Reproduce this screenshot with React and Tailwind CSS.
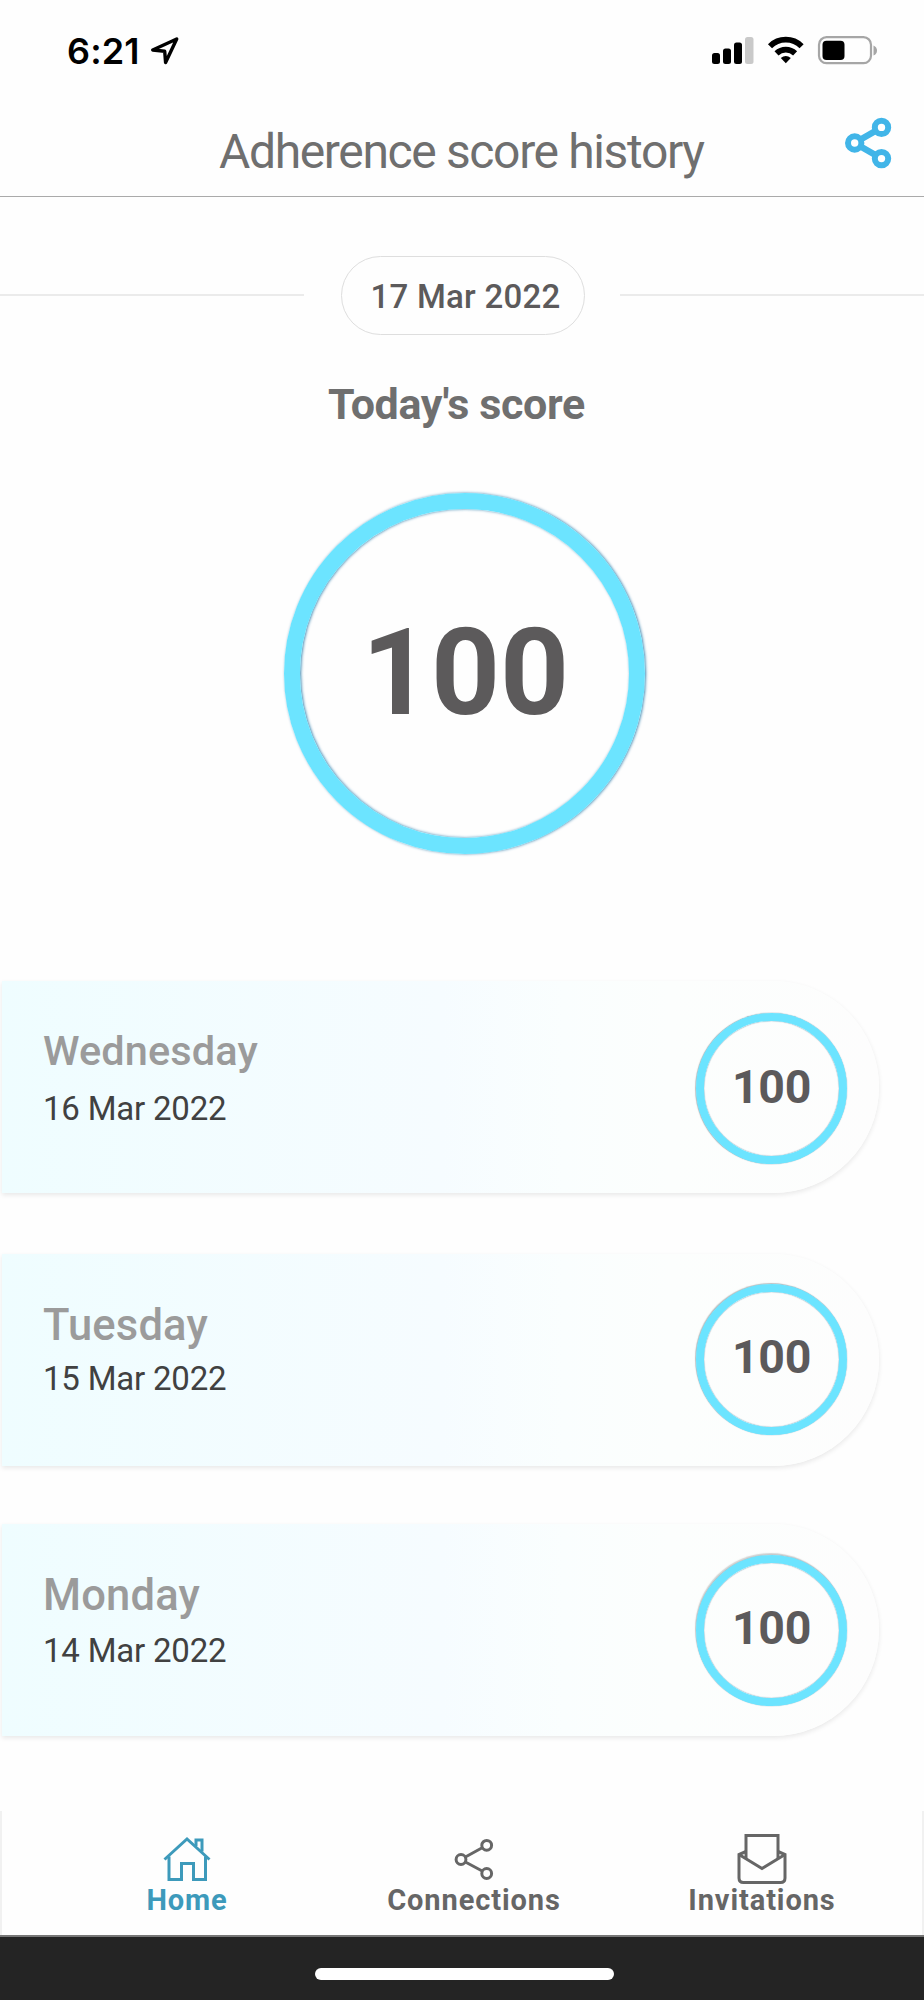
const days = [
  {
    day: "Wednesday",
    date: "16 Mar 2022",
    score: 100,
    rowClass: "mb-[61px]",
    dayClass: "mt-[46px] text-[41.5px] tracking-[0.1px]",
    dateClass: "mt-[14px]",
    ringClass: "mt-[32px] shadow-[-1px_0_1px_rgba(90,90,90,0.3),0_0_1px_rgba(20,80,120,0.8),inset_0_0_1px_rgba(20,80,120,0.8)]",
    scoreClass: "mt-[38px]",
  },
  {
    day: "Tuesday",
    date: "15 Mar 2022",
    score: 100,
    rowClass: "mb-[58px]",
    dayClass: "mt-[48px] text-[43.5px] tracking-[0.2px]",
    dateClass: "mt-[9px]",
    ringClass: "mt-[30px] shadow-[-1px_-1px_1px_rgba(90,90,90,0.3),0_0_1px_rgba(20,80,120,0.8),inset_0_0_1px_rgba(20,80,120,0.8)]",
    scoreClass: "mt-[37px]",
  },
  {
    day: "Monday",
    date: "14 Mar 2022",
    score: 100,
    rowClass: "mb-[75px]",
    dayClass: "mt-[48px] text-[43.5px] tracking-[0.2px]",
    dateClass: "mt-[11px]",
    ringClass: "mt-[31px] shadow-[-1px_-2px_1px_rgba(90,90,90,0.25),0_0_1px_rgba(20,80,120,0.8),inset_0_0_1px_rgba(20,80,120,0.8)]",
    scoreClass: "mt-[37px]",
  },
];

const StatusBar = () => (
  <div className="h-[100px] flex items-start justify-between pl-[67px] pr-[46px]">
    <div className="flex items-start pt-[29px]">
      <span className="w-[72px] whitespace-nowrap text-[36px] leading-[44px] tracking-[0.1px] font-semibold text-black font-['Inter',sans-serif]">
        6:21
      </span>
      <svg className="ml-[11px] mt-[7px]" width="30" height="30" viewBox="0 0 30 30" fill="none">
        <path d="M2.700 14 L26.700 3 L15.600 26.500 L14.700 15.300 Z" stroke="#000" strokeWidth="3.400" strokeLinejoin="round" />
      </svg>
    </div>
    <svg className="mt-[34px]" width="166" height="34" viewBox="0 0 166 34">
      <rect x="0" y="19" width="8" height="11" rx="2.500" />
      <rect x="11" y="14.500" width="8" height="15.500" rx="2.500" />
      <rect x="22" y="8.500" width="8" height="21.500" rx="2.500" />
      <rect x="33" y="3" width="8.500" height="27" rx="2.500" fill="#c9c9c9" />
      <g fill="none" stroke="#000" strokeWidth="5.800">
        <path d="M58 12.200 A22.500 22.500 0 0 1 89.600 12.200" />
        <path d="M64.500 19.300 A13.500 13.500 0 0 1 83.100 19.300" />
      </g>
      <path d="M68.800 24 Q73.800 19.800 78.800 24 L73.800 29.300 Z" />
      <rect x="107" y="3.200" width="52" height="26" rx="7.500" fill="none" stroke="#a6a6a6" strokeWidth="2.200" />
      <rect x="110.500" y="6.700" width="22" height="19.300" rx="4" />
      <path d="M161.500 11.500 Q165 13 165 16.500 Q165 20 161.500 21.500 Z" fill="#a6a6a6" />
    </svg>
  </div>
);

const Header = () => (
  <header className="h-[97px] flex items-start border-b border-[#aaaaaa]">
    <h1 className="ml-[219px] mt-[24px] w-[500px] whitespace-nowrap text-[48px] leading-[56px] tracking-[-1.36px] text-[#6f6f6f]">
      Adherence score history
    </h1>
    <svg className="ml-[126px] mt-[17px]" width="47" height="52" viewBox="0 0 47 52" fill="none" stroke="#41b5e8">
      <path d="M9.500 26 L36.500 10.500 M9.500 26 L36.500 41.500" strokeWidth="6.500" />
      <g fill="#fff" strokeWidth="6">
        <circle cx="9.700" cy="26" r="6.700" />
        <circle cx="36.500" cy="10.400" r="6.700" />
        <circle cx="36.500" cy="41.600" r="6.700" />
      </g>
    </svg>
  </header>
);

const ScoreRow = ({ item }) => (
  <div
    className={`ml-[2px] w-[877px] h-[212px] flex justify-between rounded-r-[106px] bg-[linear-gradient(90deg,#effdff,#f6fcff_50%,#fafefe_64%,#fcfefd_76%,#fdfdfd)] shadow-[0_2px_5px_rgba(0,0,0,0.09)] ${item.rowClass}`}
  >
    <div className="pl-[41px]">
      <h3 className={`leading-[48px] font-medium text-[#9b9b9b] ${item.dayClass}`}>{item.day}</h3>
      <p className={`text-[33px] leading-[40px] tracking-[-0.2px] text-[#414141] ${item.dateClass}`}>{item.date}</p>
    </div>
    <div className={`mr-[32px] size-[151px] flex justify-center rounded-full border-8 border-[#6ce4ff] ${item.ringClass}`}>
      <span className={`text-[46.5px] leading-[56px] tracking-[-0.3px] font-bold text-[#5c5a5b] ${item.scoreClass}`}>{item.score}</span>
    </div>
  </div>
);

const HomeIcon = () => (
  <svg width="48" height="46" viewBox="0 0 48 46" fill="none" stroke="#3d9abb" strokeWidth="3">
    <path d="M1.500 23.500 L24 3 L46.500 23.500" />
    <path d="M6 20.500 V43.500 H18.500 V27.500 H30.500 V43.500 H42.500 V20.500" />
    <path d="M33 10 V4 H39 V15.500" />
  </svg>
);

const ConnectionsIcon = () => (
  <svg width="40" height="46" viewBox="0 0 40 46" fill="none" stroke="#666" strokeWidth="3">
    <circle cx="7" cy="23.500" r="4.900" />
    <circle cx="32.700" cy="9.300" r="4.900" />
    <circle cx="32.700" cy="37.500" r="4.900" />
    <path d="M11.400 21 L28.200 11.800 M11.400 26 L28.200 35" />
  </svg>
);

const InvitationsIcon = () => (
  <svg width="50" height="52" viewBox="0 0 50 52" fill="none" stroke="#666" strokeWidth="3">
    <path d="M9 26 V2.500 H41 V26" />
    <path d="M9 18.500 L2 21.500 V45 Q2 49.500 6.500 49.500 H43.500 Q48 49.500 48 45 V21.500 L41 18.500" />
    <path d="M2 21.500 L25 35.500 L48 21.500" />
  </svg>
);

const BottomNav = () => (
  <nav className="h-[124px] flex items-start border-x-2 border-x-[#f1f1f1] text-[29px] leading-[34px] font-bold tracking-[0.9px]">
    <div className="ml-[125px] w-[120px] pt-[25px] flex flex-col items-center text-[#3d9abb]">
      <div className="h-[47px]"><HomeIcon /></div>
      <span>Home</span>
    </div>
    <div className="ml-[127px] w-[200px] pt-[25px] flex flex-col items-center text-[#666]">
      <div className="h-[47px]"><ConnectionsIcon /></div>
      <span>Connections</span>
    </div>
    <div className="ml-[88px] w-[200px] pt-[22px] flex flex-col items-center text-[#666]">
      <div className="h-[50px]"><InvitationsIcon /></div>
      <span>Invitations</span>
    </div>
  </nav>
);

const App = () => {
  return (
    <div className="w-[924px] h-[2000px] overflow-hidden bg-[#fefefe] font-['Roboto',sans-serif]">
      <StatusBar />
      <Header />

      <div className="mt-[58px] h-[80px] flex items-center">
        <div className="w-[304px] h-[2px] bg-[#ebebeb]"></div>
        <div className="ml-[37px] w-[244px] h-[79px] flex justify-center rounded-full border border-[#dedede]">
          <span className="mt-[20px] ml-[5px] text-[33px] leading-[40px] tracking-[0.25px] font-medium whitespace-nowrap text-[#5c5a5b]">
            17 Mar 2022
          </span>
        </div>
        <div className="ml-[35px] flex-1 h-[2px] bg-[#ebebeb]"></div>
      </div>

      <h2 className="mt-[43px] ml-[328px] h-[52px] text-[43px] leading-[52px] tracking-[-0.35px] font-bold whitespace-nowrap text-[#6f6f6f]">
        Today's score
      </h2>

      <div className="mt-[63px] ml-[284px] size-[361px] flex justify-center rounded-full border-[16px] border-[#6ce4ff] shadow-[1px_0_3px_rgba(20,110,160,0.8),inset_1px_0_3px_rgba(20,110,160,0.8)]">
        <span className="mt-[93px] ml-[2px] text-[120.5px] leading-[142px] font-bold text-[#5c5a5b]">100</span>
      </div>

      <div className="mt-[127px]">
        {days.map((item) => (
          <ScoreRow key={item.day} item={item} />
        ))}
      </div>

      <BottomNav />

      <div className="h-[65px] flex justify-center border-t-2 border-[#777] bg-[#242424]">
        <div className="mt-[31px] ml-[5px] w-[299px] h-[12px] rounded-full bg-white"></div>
      </div>
    </div>
  );
};

export default App;
